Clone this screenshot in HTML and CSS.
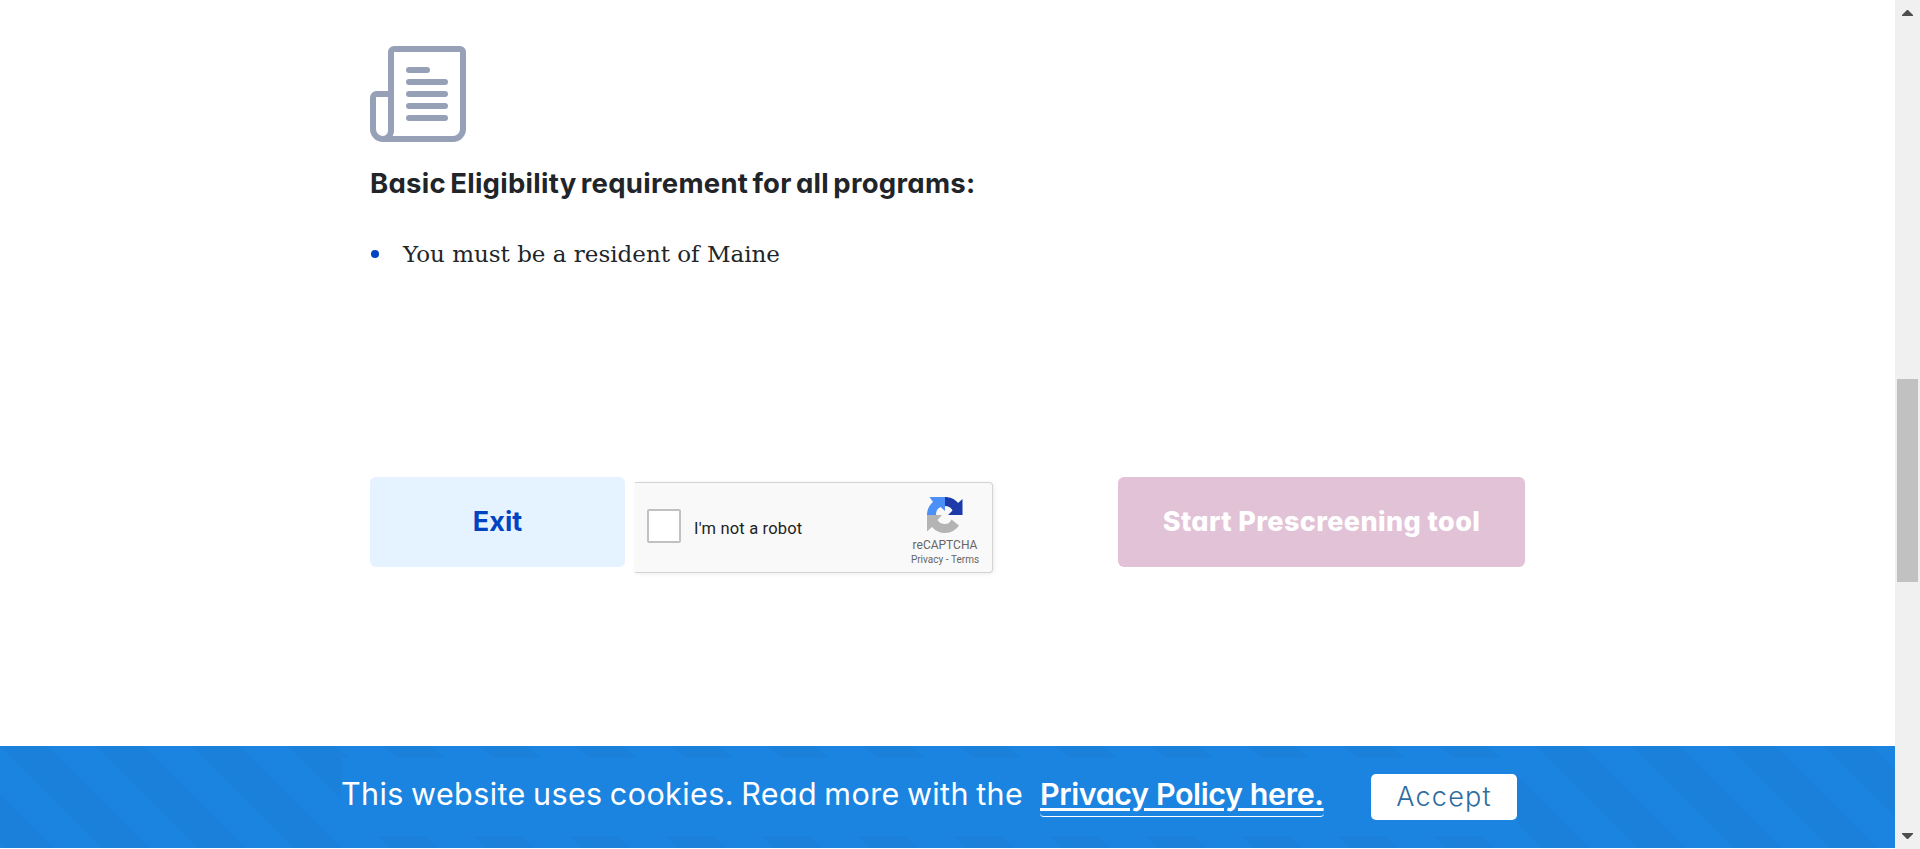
FILE: index.html
```html
<!DOCTYPE html>
<html lang="en">
<head>
<meta charset="utf-8">
<title>Basic Eligibility</title>
<link rel="stylesheet" href="styles.css">
</head>
<body>
<div class="window">
  <div class="page">
    <main class="content">
      <svg class="doc-icon" viewBox="0 0 96 96" fill="none" stroke="#96a1b7" stroke-width="6" stroke-linecap="round" stroke-linejoin="round">
        <path d="M21 48H6.500A3.500 3.500 0 0 0 3 51.500V83a10 10 0 0 0 10 10H83a10 10 0 0 0 10-10V6a3 3 0 0 0-3-3H24a3 3 0 0 0-3 3V84.500a8.500 8.500 0 0 1-8.500 8.500"/>
        <path d="M39 24H57M39 36H75M39 48H75M39 60H75M39 72H75"/>
      </svg>
      <h2 class="heading">Basic Eligibility requirement for all programs:</h2>
      <ul class="requirements"><li>You must be a resident of Maine</li></ul>
      <div class="actions">
        <button class="btn btn-exit">Exit</button>
        <div class="captcha">
          <span class="checkbox"></span>
          <span class="captcha-label">I'm not a robot</span>
          <div class="captcha-brand">
            <svg class="captcha-logo" viewBox="0 0 36 36">
              <path fill="#1c3aa9" d="M18 0C23 0 28 2 31 6L35.500 2V18H21L25.500 13.500C24 10.500 21.500 9 18 9Z"/>
              <path fill="#4b90f6" d="M18 0V14L13.500 10C10.500 11.500 9 14 9 18H0C0 13 2 8.500 6 5L2.500 0Z"/>
              <path fill="#b4b4b4" d="M0 18H15L10.500 23C12.500 26 15 27 18 27C21 27 23 25.500 24.500 22.500L32 28.500C29 33 24 36 18 36C13 36 8.500 34 5 30L0 34.500Z"/>
            </svg>
            <span class="brand-name">reCAPTCHA</span>
            <span class="brand-links">Privacy&nbsp;-&nbsp;Terms</span>
          </div>
        </div>
        <button class="btn btn-start">Start Prescreening tool</button>
      </div>
    </main>
    <footer class="cookies">
      <div class="cookie-box">
        <span class="cookie-text">This website uses cookies. Read more with the</span>
        <a class="cookie-link">Privacy Policy here.</a>
        <button class="accept">Accept</button>
      </div>
    </footer>
  </div>
  <div class="scrollbar">
    <svg class="arrow" viewBox="0 0 12 6"><path d="M0 6H11V5L6 0H5L0 5Z"/></svg>
    <div class="thumb"></div>
    <svg class="arrow" viewBox="0 0 12 6"><path d="M0 0H11V1L6 6H5L0 1Z"/></svg>
  </div>
</div>
</body>
</html>
```
FILE: styles.css
```css
* { box-sizing: border-box; }
body { margin: 0; background: #fff; overflow: hidden; }
button { border: 0; padding: 0; margin: 0; }
.window { display: grid; grid-template-columns: 1895px 25px; height: 849px; }
.page { display: flex; flex-direction: column; justify-content: space-between; font-family: Inter, "Open Sans", sans-serif; font-feature-settings: "cv11" 1, "ss03" 1; }
.content { padding: 46px 370px 0; display: flex; flex-direction: column; }
.doc-icon { width: 96px; height: 96px; display: block; }
.heading { margin: 23px 0 0; font-size: 27.5px; line-height: 36px; font-weight: 700; color: #212529; white-space: nowrap; letter-spacing: 0.27px; word-spacing: -2.5px; }
.requirements { list-style: none; margin: 35px 0 0; padding: 0; }
.requirements li { display: flex; align-items: center; gap: 24px; height: 36px; font: 23px/36px "DejaVu Serif", serif; color: #212529; white-space: nowrap; }
.requirements li::before { content: ""; width: 8px; height: 8px; margin-left: 1px; border-radius: 50%; background: #0044c2; }
.actions { display: flex; align-items: flex-start; margin-top: 205px; width: 1155px; }
.btn { height: 90px; border-radius: 6px; font-family: inherit; font-feature-settings: inherit; font-size: 27px; line-height: 36px; font-weight: 700; white-space: nowrap; }
.btn-exit { width: 255px; background: #e5f2ff; color: #0044c2; }
.btn-start { width: 407px; margin-left: auto; background: #e2c2d7; color: #fff; font-weight: 800; letter-spacing: 0.4px; }
.captcha { display: flex; align-items: center; width: 358px; height: 91px; margin: 5px 0 0 10px; padding: 0 12px 0 12px; background: #f9f9f9; border: 1px solid #d3d3d3; border-left: 0; border-radius: 0 4px 4px 0; box-shadow: 1px 1px 4px rgba(0,0,0,.08); font-family: Roboto, sans-serif; }
.checkbox { width: 34px; height: 34px; margin-top: -3px; border: 2px solid #c1c1c1; border-radius: 2px; background: #fff; }
.captcha-label { margin: 2px 0 0 13px; font-size: 16.5px; letter-spacing: 0.17px; color: #222; white-space: nowrap; }
.captcha-brand { display: flex; flex-direction: column; align-items: center; width: 70px; margin-left: auto; color: #666; white-space: nowrap; }
.captcha-logo { width: 36px; height: 36px; margin-top: 7px; }
.brand-name { font-size: 12px; line-height: 14px; margin-top: 5px; }
.brand-links { font-size: 10px; line-height: 13px; margin-top: 1px; }
.cookies { height: 102px; margin-bottom: 1px; padding: 12px 0 0 341px; background: linear-gradient(45deg, #1a80da 25%, transparent 25%, transparent 50%, #1a80da 50%, #1a80da 75%, transparent 75%) 1px 0 / 96px 96px #1b84e0; }
.cookie-box { display: flex; align-items: flex-start; width: 1176px; height: 78px; background: #1b84e0; color: #fff; font-size: 30.5px; line-height: 40px; white-space: nowrap; }
.cookie-text { width: 699px; margin-top: 16px; letter-spacing: 0.4px; word-spacing: -1.7px; }
.cookie-link { width: 284px; height: 43px; margin-top: 16px; border-bottom: 1px solid #fff; border-radius: 4px; font-weight: 600; letter-spacing: -0.42px; text-decoration: underline; text-decoration-thickness: 3px; text-underline-offset: 3px; }
.accept { width: 146px; height: 46px; margin: 16px 0 0 auto; padding-bottom: 1px; border-radius: 5px; background: #fff; color: #2e6c9e; font-family: inherit; font-size: 27px; font-weight: 300; letter-spacing: 1.2px; font-feature-settings: inherit; }
.scrollbar { background: #f0f0f0; display: flex; flex-direction: column; align-items: center; padding: 10px 0; }
.thumb { width: 21px; height: 203px; background: #c1c1c1; margin: 363px 0 251px; }
.arrow { width: 12px; height: 6px; fill: #4d4d4d; }
```
